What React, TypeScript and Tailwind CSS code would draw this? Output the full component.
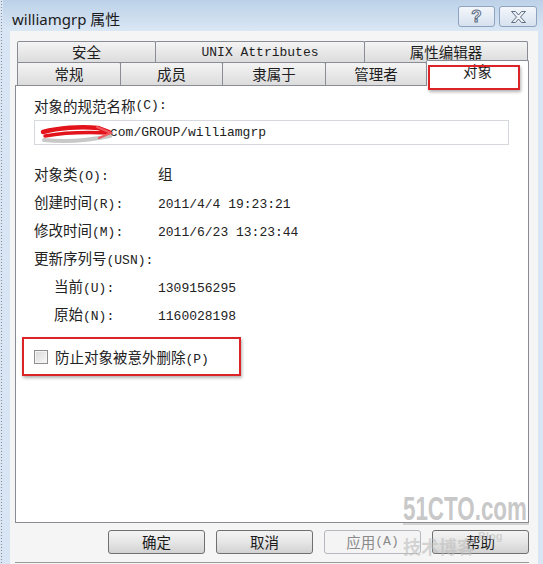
import type { ReactNode } from "react";

const CJK = /([\u2E80-\u9FFF\uFF00-\uFFEF]+)/;

// SimSun-like mix: CJK runs a bit larger than the half-width latin runs
function Mix({ text }: { text: string }) {
  const parts = text.split(CJK);
  return (
    <>
      {parts.map((p, i) =>
        !p ? null : CJK.test(p) ? (
          <span key={i} className="font-['Noto_Sans_CJK_SC',sans-serif] text-[14.5px]">
            {p}
          </span>
        ) : (
          <span key={i} className="font-['Liberation_Mono','Noto_Sans_CJK_SC',monospace] text-[13px]">
            {p}
          </span>
        )
      )}
    </>
  );
}

function Tab({ label, w, first }: { label: string; w: string; first?: boolean }) {
  return (
    <div
      className={`${w} ${first ? "" : "-ml-px"} flex h-full items-center justify-center rounded-t-[2px] border border-b-0 border-[#898c95] bg-gradient-to-b from-[#f4f4f4] to-[#dcdcdc] leading-none text-[#1e1e1e]`}
    >
      <Mix text={label} />
    </div>
  );
}

function Row({ label, value, indent }: { label: string; value?: string; indent?: boolean }) {
  return (
    <div className="flex h-[28px] items-center text-[#222]">
      <div className={indent ? "w-[124px] pl-[20px]" : "w-[124px]"}>
        <Mix text={label} />
      </div>
      {value ? (
        <div>
          <Mix text={value} />
        </div>
      ) : null}
    </div>
  );
}

function Btn({ children, disabled }: { children: ReactNode; disabled?: boolean }) {
  return (
    <div
      className={
        disabled
          ? "flex h-[24px] w-[97px] items-center justify-center rounded-[3px] border border-[#b5b9bd] bg-[#f4f4f4] text-[#8a8a8a]"
          : "flex h-[24px] w-[97px] items-center justify-center rounded-[3px] border border-[#707070] bg-gradient-to-b from-[#f3f3f3] via-[#e6e6e6] to-[#d2d2d2] text-[#1a1a1a]"
      }
    >
      {children}
    </div>
  );
}

export default function App() {
  return (
    <div className="relative flex h-[564px] w-[543px] overflow-hidden bg-[#d8e5f4]">
      {/* dotted edge of the capture */}
      <div className="h-full w-[3px] bg-[radial-gradient(#8c8c8c_1px,transparent_1px)] bg-[length:3px_3px]" />

      <div className="flex flex-1 flex-col">
        {/* title bar */}
        <div className="flex h-[31px] shrink-0 items-start bg-gradient-to-b from-[#bcd1e8] to-[#dae7f5] pl-[9px] pr-[6px]">
          <div className="mt-[8px] font-['Noto_Sans','Noto_Sans_CJK_SC',sans-serif] text-[15px] leading-[22px] text-[#1b1b1b]">
            williamgrp 属性
          </div>
          <div className="ml-auto mt-[6px] flex gap-[4px]">
            <div className="flex h-[21px] w-[37px] items-center justify-center rounded-[3px] border border-[#8ea3bf] bg-gradient-to-b from-[#f4f7fb] to-[#d6e1ee]">
              <span className="font-['Liberation_Sans',sans-serif] text-[17px] font-bold leading-none text-[#eef2f7] [-webkit-text-stroke:1px_#5f6f84]">
                ?
              </span>
            </div>
            <div className="flex h-[21px] w-[38px] items-center justify-center rounded-[3px] border border-[#8ea3bf] bg-gradient-to-b from-[#f4f7fb] to-[#d6e1ee]">
              <svg width="17" height="14" viewBox="0 0 17 14">
                <polygon
                  points="1.5,1.5 5.5,1.5 8.5,5 11.5,1.5 15.5,1.5 10.5,7 15.5,12.5 11.5,12.5 8.5,9 5.5,12.5 1.5,12.5 6.5,7"
                  fill="#eef2f7"
                  stroke="#5f6f84"
                  strokeWidth="1"
                  strokeLinejoin="round"
                />
              </svg>
            </div>
          </div>
        </div>

        <div className="flex flex-1">
          <div className="w-[7px]" />

          {/* client area */}
          <div className="flex flex-1 flex-col bg-[#f6f5f5] pl-[5px] pr-[9px] pt-[10px]">
            {/* tabs */}
            <div className="ml-[2px] flex h-[21px]">
              <Tab label="安全" w="w-[139px]" first />
              <Tab label="UNIX Attributes" w="w-[210px]" />
              <Tab label="属性编辑器" w="w-[164px]" />
            </div>
            <div className="ml-[2px] flex h-[23px] items-end border-t border-[#898c95]">
              <div className="flex h-[23px] -mt-px">
                <Tab label="常规" w="w-[104px]" first />
                <Tab label="成员" w="w-[103px]" />
                <Tab label="隶属于" w="w-[104px]" />
                <Tab label="管理者" w="w-[102px]" />
              </div>
              <div className="relative z-10 -mb-px -ml-px flex h-[26px] w-[103px] items-start justify-center rounded-t-[2px] border border-b-0 border-[#898c95] bg-white pt-[3px] leading-none text-[#1e1e1e]">
                <Mix text="对象" />
                <div className="pointer-events-none absolute left-[1px] top-[4px] h-[25px] w-[92px] border-2 border-[#dc2328] shadow-[1px_2px_3px_rgba(0,0,0,0.3)]" />
              </div>
            </div>

            {/* panel */}
            <div className="flex h-[438px] w-[514px] flex-col border border-[#898c95] bg-white pl-[18px] pt-[10px]">
              <div className="flex h-[20px] items-center text-[#222]">
                <Mix text="对象的规范名称(C):" />
              </div>
              <div className="relative mt-[4px] flex h-[25px] w-[475px] items-center border border-[#d5d8dc] bg-white pl-[75px] text-[#222]">
                <Mix text="com/GROUP/williamgrp" />
                <svg
                  className="pointer-events-none absolute left-[5px] top-[2px]"
                  width="76"
                  height="22"
                  viewBox="0 0 76 22"
                >
                  <path d="M4 17 C 22 19, 46 18, 70 13" stroke="#4a4a4a" strokeOpacity="0.3" strokeWidth="4" fill="none" strokeLinecap="round" />
                  <path d="M3 9 C 18 5, 40 3, 58 5 L 69 9" stroke="#e3131b" strokeWidth="4.5" fill="none" strokeLinecap="round" />
                  <path d="M5 13 C 22 10, 44 9, 68 10" stroke="#e3131b" strokeWidth="3.5" fill="none" strokeLinecap="round" />
                  <path d="M57 4 L 71 10 L 59 15" stroke="#ef5a5f" strokeWidth="2" fill="none" strokeLinecap="round" />
                </svg>
              </div>

              <div className="mt-[15px] flex flex-col">
                <Row label="对象类(O):" value="组" />
                <Row label="创建时间(R):" value="2011/4/4 19:23:21" />
                <Row label="修改时间(M):" value="2011/6/23 13:23:44" />
                <Row label="更新序列号(USN):" />
                <Row label="当前(U):" value="1309156295" indent />
                <Row label="原始(N):" value="1160028198" indent />
              </div>

              <div className="relative mt-[15px] flex h-[28px] items-center gap-[7px] text-[#222]">
                <div className="h-[14px] w-[14px] border border-[#8e8f8f] bg-gradient-to-br from-[#d8d8d8] to-[#f9f9f9] shadow-[inset_0_0_0_1px_#f4f4f4]" />
                <div>
                  <Mix text="防止对象被意外删除(P)" />
                </div>
                <div className="pointer-events-none absolute left-[-12px] top-[-6px] h-[39px] w-[219px] border-2 border-[#dc2328] shadow-[1px_2px_3px_rgba(0,0,0,0.3)]" />
              </div>
            </div>

            {/* buttons */}
            <div className="mt-[7px] flex justify-end gap-[11px]">
              <Btn>
                <Mix text="确定" />
              </Btn>
              <Btn>
                <Mix text="取消" />
              </Btn>
              <Btn disabled>
                <Mix text="应用(A)" />
              </Btn>
              <Btn>
                <Mix text="帮助" />
              </Btn>
            </div>

            <div className="mb-[1px] mt-auto h-px bg-[#9a9a9a]" />
          </div>

          <div className="w-[5px]" />
        </div>
      </div>

      {/* 51CTO watermark */}
      <div className="pointer-events-none absolute left-[403px] top-[496px] flex w-[126px] flex-col">
        <div className="h-[25px] overflow-visible">
          <div className="origin-top-left scale-x-[0.86] scale-y-[1.25] whitespace-nowrap font-['Liberation_Sans',sans-serif] text-[26px] font-bold leading-[20px] text-[#b9b9b9]/80">
            51CTO.com
          </div>
        </div>
        <div className="mt-[2px] h-[2px] w-[126px] bg-[#c4c4c4]/70" />
        <div className="mt-[12px] flex items-start">
          <span className="font-['Noto_Sans_CJK_SC',sans-serif] text-[18px] font-bold leading-none text-[#bdbdbd]/60">
            技术博客
          </span>
          <span className="ml-[3px] mt-[-6px] font-['Liberation_Sans',sans-serif] text-[11px] font-bold leading-none text-[#c4c4c4]/70">
            Blog
          </span>
        </div>
      </div>
    </div>
  );
}
